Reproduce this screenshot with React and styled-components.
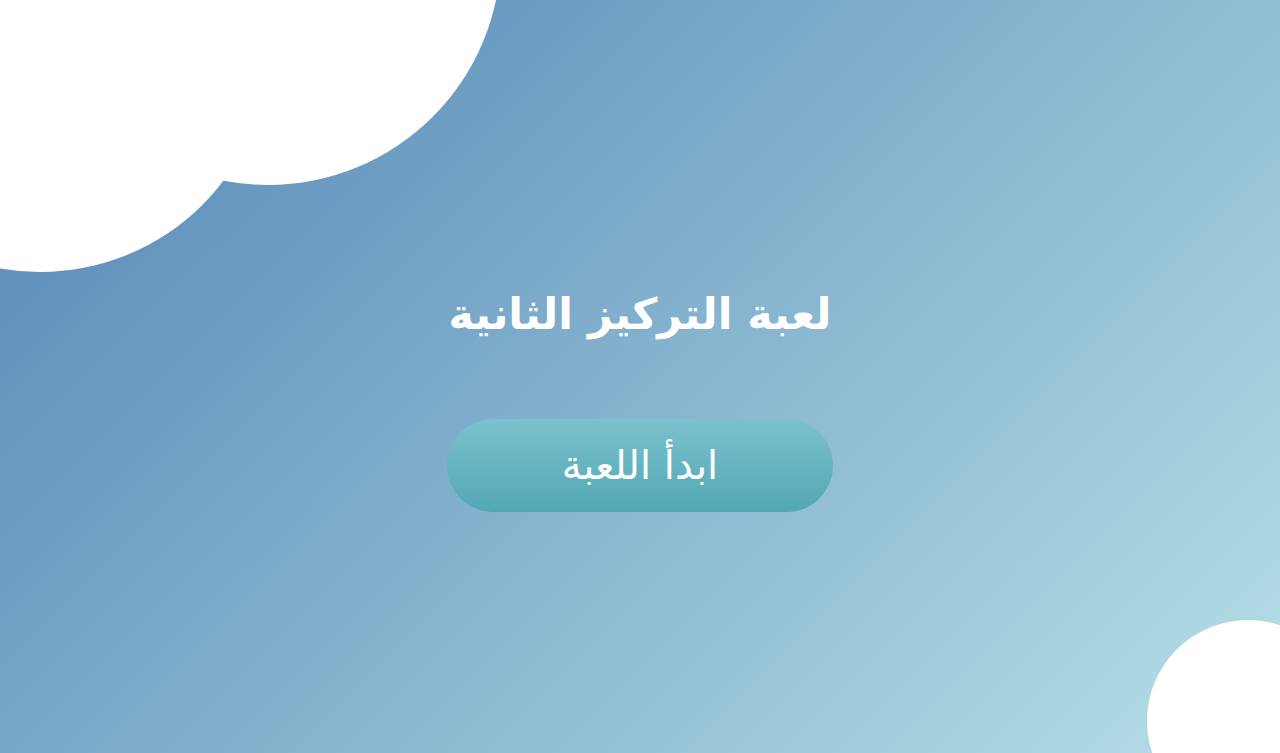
import React from 'react';
import styled, { createGlobalStyle } from 'styled-components';

const GlobalStyle = createGlobalStyle`
    html, body {
        margin: 0;
        padding: 0;
        height: 100%;
    }
    body {
        font-family: "DejaVu Sans", "Noto Sans", sans-serif;
    }
`;

const Screen = styled.div`
    position: relative;
    width: 100vw;
    height: 100vh;
    overflow: hidden;
    background: linear-gradient(135deg, #5384b5 0%, #b7e0e6 100%);
    display: flex;
    flex-direction: column;
    align-items: center;
    justify-content: flex-start;
    padding-top: 284px;
    box-sizing: border-box;
`;

const Cloud = styled.div`
    position: absolute;
    border-radius: 50%;
    background: #ffffff;
    width: ${({ size }) => size}px;
    height: ${({ size }) => size}px;
    left: ${({ cx, size }) => cx - size / 2}px;
    top: ${({ cy, size }) => cy - size / 2}px;
`;

const Title = styled.h1`
    margin: 0;
    color: #ffffff;
    font-size: 43px;
    font-weight: 700;
    line-height: 60px;
    direction: rtl;
    position: relative;
`;

const StartButton = styled.button`
    margin-top: 75px;
    width: 386px;
    height: 93px;
    border: none;
    border-radius: 47px;
    background: linear-gradient(to bottom, #7ac2ce 0%, #53a7b4 100%);
    color: #ffffff;
    font-family: inherit;
    font-size: 40px;
    font-weight: 400;
    direction: rtl;
    cursor: pointer;
    position: relative;
    padding: 0 0 2px;
`;

const App = () => {
    return (
        <>
            <GlobalStyle />
            <Screen>
                <Cloud size={460} cx={40} cy={42} />
                <Cloud size={466} cx={268} cy={-48} />
                <Cloud size={202} cx={1248} cy={721} />
                <Title>لعبة التركيز الثانية</Title>
                <StartButton>ابدأ اللعبة</StartButton>
            </Screen>
        </>
    );
};

export default App;
